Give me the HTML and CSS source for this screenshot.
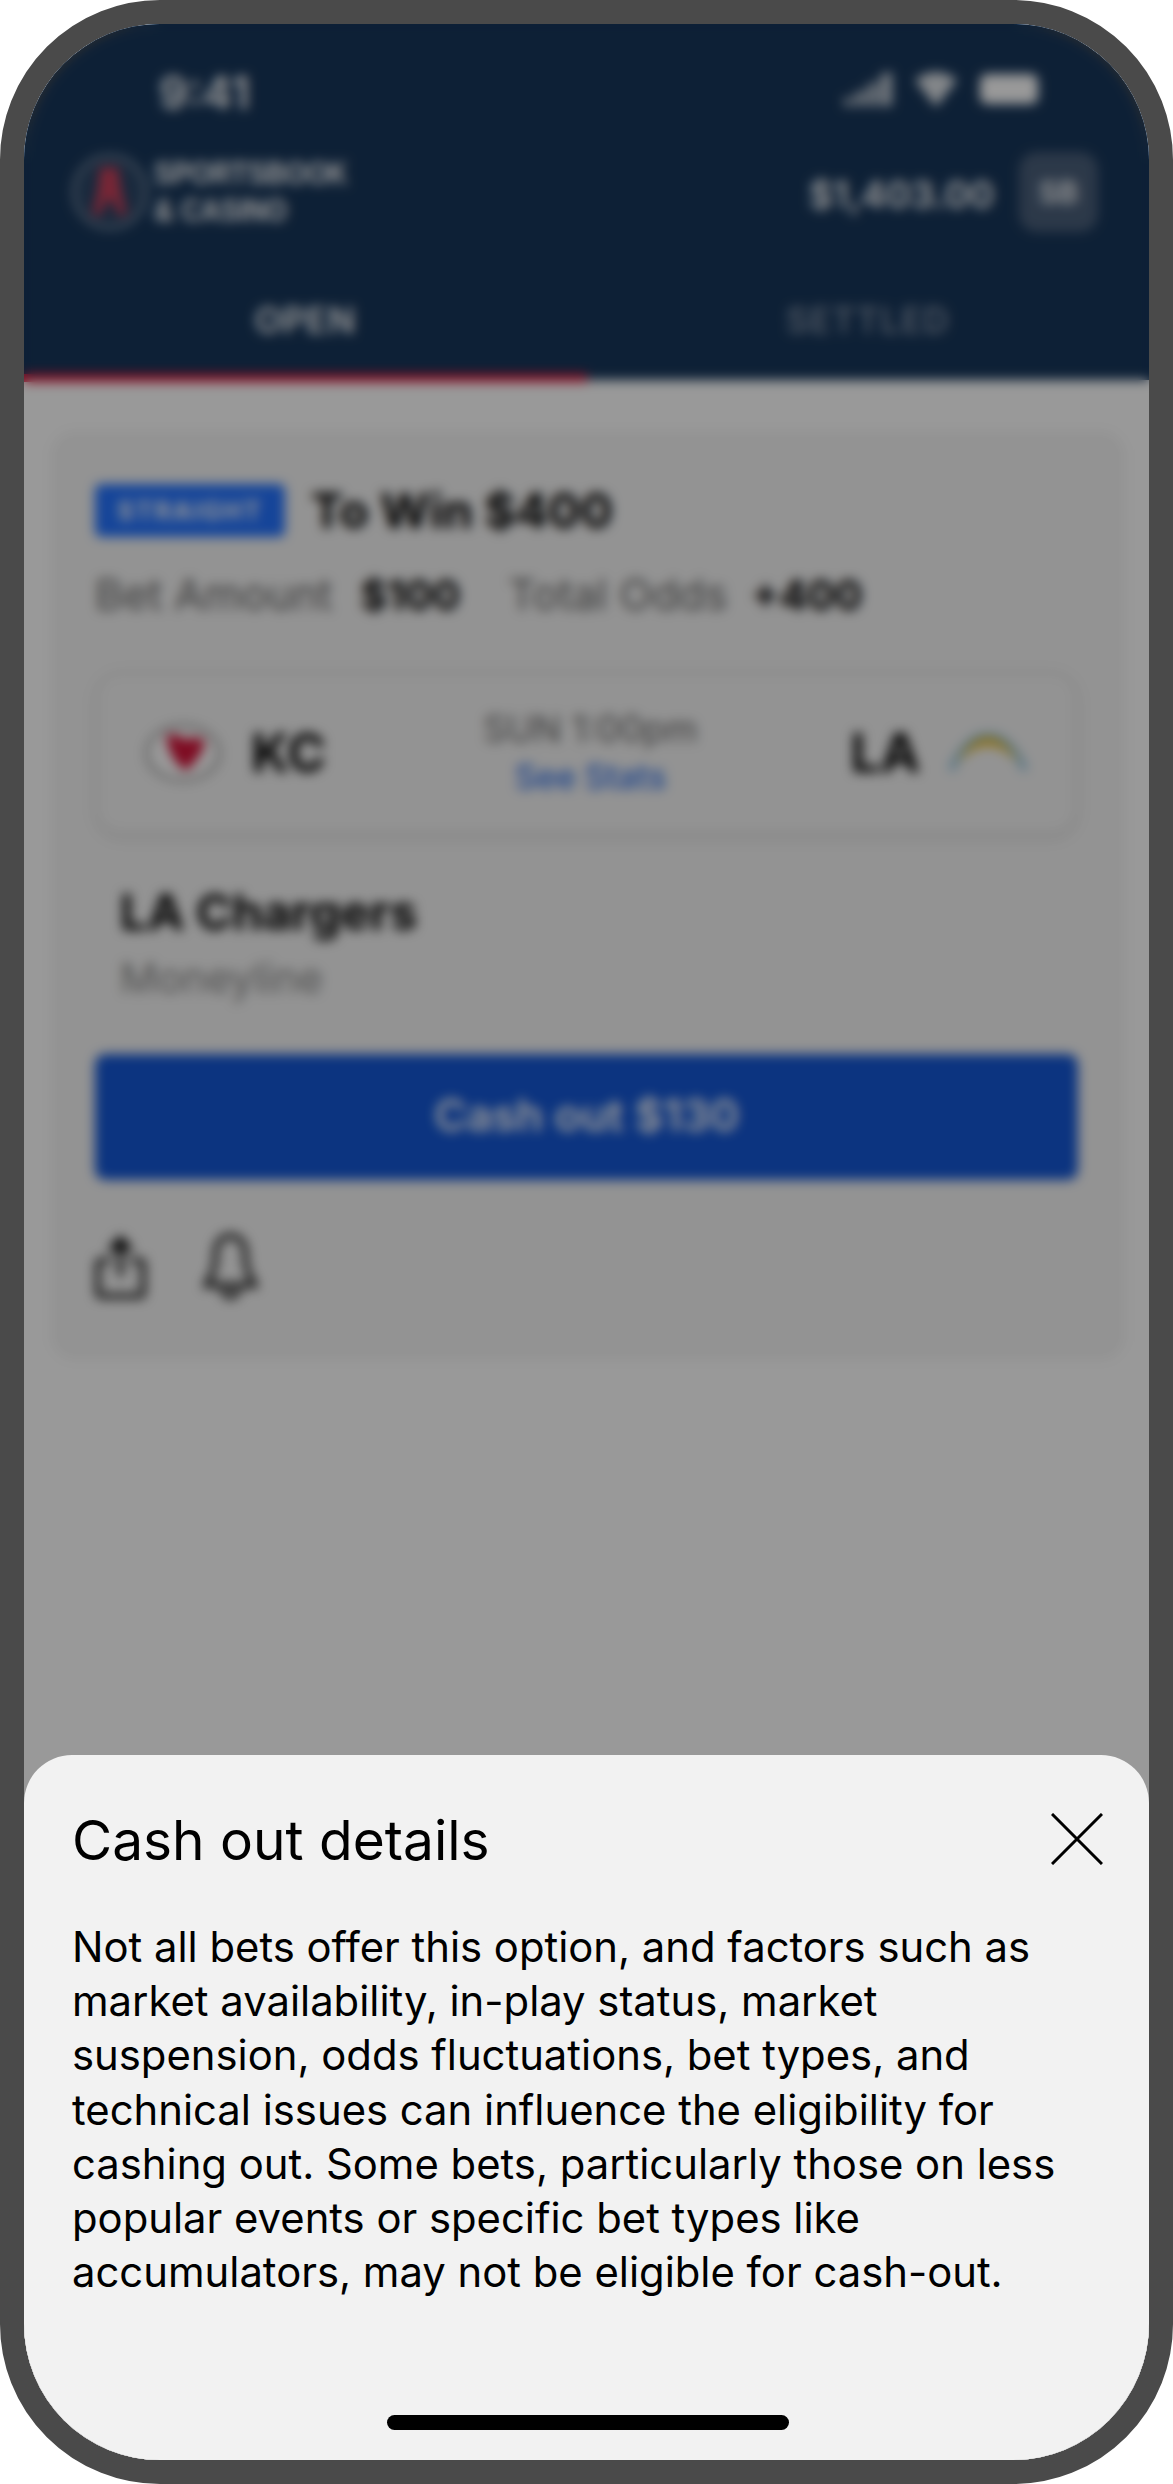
FILE: index.html
```html
<!DOCTYPE html>
<html lang="en">
<head>
<meta charset="utf-8">
<title>Cash out details</title>
<link rel="stylesheet" href="styles.css">
</head>
<body>
<div class="phone">
  <div class="screen">
    <header class="top">
      <div class="status">
        <span class="time">9:41</span>
        <div class="status-icons">
          <svg class="sig" viewBox="0 0 52 34"><path d="M0 34V26h9v8zM12 34V19h9v15zM24 34V11h9v23zM36 34V3l10-3h2v34z"/></svg>
          <svg class="wifi" viewBox="0 0 42 36"><path d="M0 9Q21-7 42 9L21 36z"/></svg>
          <svg class="batt" viewBox="0 0 58 30"><rect width="58" height="30" rx="7"/></svg>
        </div>
      </div>
      <div class="brandbar">
        <div class="brand">
          <svg class="mark" viewBox="0 0 78 78"><circle cx="39" cy="39" r="36" fill="#fff" fill-opacity=".08" stroke="#fff" stroke-opacity=".4" stroke-width="4"/><path d="M29 14h18l3 22 6 26H46l-3-14h-9l-3 14H21l6-26z" fill="#c8405a"/></svg>
          <div class="brand-text"><span>SPORTSBOOK</span><span>&amp; CASINO</span></div>
        </div>
        <div class="account">
          <span class="bal">$1,403.00</span>
          <span class="avatar">SB</span>
        </div>
      </div>
      <nav class="tabs">
        <div class="tab active">OPEN</div>
        <div class="tab muted">SETTLED</div>
      </nav>
    </header>
    <main class="content">
      <section class="card">
        <div class="headline">
          <span class="badge">STRAIGHT</span>
          <span class="towin">To Win $400</span>
        </div>
        <div class="amounts">
          <span class="lbl">Bet Amount</span><strong class="val">$100</strong>
          <span class="lbl lbl2">Total Odds</span><strong class="val val2">+400</strong>
        </div>
        <div class="game">
          <div class="team">
            <svg class="kc" viewBox="0 0 76 58"><ellipse cx="38" cy="29" rx="36" ry="27" fill="#fff" stroke="#888" stroke-width="3"/><path d="M21 11q11-3 19 5 8-5 20 0-1 14-19 31Q24 36 21 11z" fill="#d3143a"/></svg>
            <span class="abbr">KC</span>
          </div>
          <div class="when">
            <span class="kick">SUN 1:00pm</span>
            <span class="stats">See Stats</span>
          </div>
          <div class="team">
            <span class="abbr">LA</span>
            <svg class="lac" viewBox="0 0 80 42"><path d="M3 38Q20 2 40 4q20-2 37 34" fill="none" stroke="#6fb4dd" stroke-width="5"/><path d="M8 32Q22 5 40 5q18 0 32 27Q56 14 40 14T8 32z" fill="#f2c230"/></svg>
          </div>
        </div>
        <div class="pick">
          <div class="pick-team">LA Chargers</div>
          <div class="pick-mkt">Moneyline</div>
        </div>
        <button class="cash">Cash out $130</button>
        <div class="actions">
          <svg class="act" viewBox="0 0 52 68"><path d="M16 28H6a3 3 0 0 0-3 3v30a3 3 0 0 0 3 3h40a3 3 0 0 0 3-3V31a3 3 0 0 0-3-3H36M26 44V6" fill="none" stroke="#000" stroke-width="5"/><path d="M12 18 26 2l14 16z"/></svg>
          <svg class="act bell" viewBox="0 0 56 68"><path d="M28 3c-10 0-15 8-15 18 0 14-4 24-10 32h50c-6-8-10-18-10-32 0-10-5-18-15-18zM19 57q9 16 18 0" fill="none" stroke="#000" stroke-width="5"/></svg>
        </div>
      </section>
    </main>
  </div>
  <div class="scrim"></div>
  <aside class="sheet">
    <div class="sheet-head">
      <h2 class="sheet-title">Cash out details</h2>
      <svg class="close" viewBox="0 0 52 52"><path d="M1 1 51 51M51 1 1 51" fill="none" stroke="#000" stroke-width="3"/></svg>
    </div>
    <p class="sheet-body">Not all bets offer this option, and factors such as market availability, in-play status, market suspension, odds fluctuations, bet types, and technical issues can influence the eligibility for cashing out. Some bets, particularly those on less popular events or specific bet types like accumulators, may not be eligible for cash-out.</p>
    <div class="home"></div>
  </aside>
</div>
</body>
</html>
```
FILE: styles.css
```css
* { box-sizing: border-box; }
html, body { margin: 0; background: #fff; }
body { font-family: Inter, "Liberation Sans", sans-serif; }
.phone {
  position: relative;
  width: 1173px;
  height: 2484px;
  border: 24px solid #4a4a4a;
  border-radius: 160px;
  overflow: hidden;
  background: #fff;
}
.screen { height: 100%; display: flex; flex-direction: column; background: #fff; }
.top { background: #17365a; color: #fff; height: 356px; display: flex; flex-direction: column; }
.status { display: flex; justify-content: space-between; align-items: center; height: 70px; margin-top: 33px; padding: 0 111px 0 135px; }
.time { font-size: 45px; font-weight: 600; }
.status-icons { display: flex; align-items: center; gap: 19px; margin-bottom: 6px; }
.status-icons svg { fill: #fff; display: block; }
.sig { width: 52px; height: 34px; fill-opacity: .75; }
.wifi { width: 42px; height: 36px; fill-opacity: .85; }
.batt { width: 58px; height: 30px; margin-left: 4px; }
.brandbar { display: flex; justify-content: space-between; align-items: center; padding: 0 51px 0 47px; margin-top: 25px; height: 80px; }
.brand { display: flex; align-items: center; gap: 5px; }
.mark { width: 78px; height: 78px; }
.brand-text { display: flex; flex-direction: column; font-family: "Liberation Sans", sans-serif; font-weight: 700; font-size: 32px; line-height: 37px; }
.brand-text span { display: block; width: 192px; transform-origin: left; transform: scaleX(.85); white-space: nowrap; }
.account { display: flex; align-items: center; gap: 25px; }
.bal { font-size: 37.5px; font-weight: 600; padding-top: 5px; }
.avatar { width: 79px; height: 80px; border-radius: 18px; background: #4a5f7a; display: flex; align-items: center; justify-content: center; font-size: 30px; font-weight: 600; }
.tabs { display: grid; grid-template-columns: 1fr 1fr; margin-top: auto; }
.tab { height: 88px; display: flex; align-items: center; justify-content: center; font-size: 35px; font-weight: 600; letter-spacing: 1px; padding-bottom: 28px; border-bottom: 8px solid transparent; margin-bottom: -2px; }
.tab.active { border-color: #e8183a; }
.tab.muted { color: #8593a6; }
.content { flex: 1; padding: 51px 24px 0 27px; }
.card { height: 929px; background: #f5f5f5; border-radius: 24px; padding: 50px 47px 0 44px; }
.headline { display: flex; align-items: center; gap: 26px; }
.badge { width: 190px; height: 53px; background: #2473ff; color: #fff; border-radius: 6px; font-size: 25px; font-weight: 700; letter-spacing: 2px; display: flex; align-items: center; justify-content: center; }
.towin { font-size: 48px; font-weight: 700; color: #000; }
.amounts { display: flex; align-items: baseline; margin-top: 28px; font-size: 43px; height: 54px; }
.lbl { color: #666; }
.lbl2 { margin-left: 48px; }
.val { margin-left: 28px; font-size: 41px; font-weight: 700; color: #000; }
.val2 { margin-left: 24px; }
.game { display: flex; justify-content: space-between; align-items: center; height: 164px; margin-top: 49px; border: 3px solid #e3e3e3; border-radius: 26px; padding: 0 47px 0 47px; box-shadow: 0 4px 8px rgba(0,0,0,.08); }
.team { display: flex; align-items: center; gap: 30px; }
.kc { width: 76px; height: 58px; }
.lac { width: 80px; height: 42px; margin-left: -2px; }
.abbr { font-size: 53px; font-weight: 700; color: #000; }
.when { display: flex; flex-direction: column; align-items: center; font-size: 36.5px; line-height: 48px; margin-left: 4px; }
.kick { color: #666; }
.stats { color: #2d6fe8; font-size: 33.5px; font-weight: 500; }
.pick { padding: 0 25px; margin-top: 50px; }
.pick-team { font-size: 49px; font-weight: 700; color: #000; line-height: 56px; }
.pick-mkt { font-size: 41.5px; color: #888; line-height: 50px; margin-top: 12px; }
.cash { display: block; width: 983px; height: 126px; margin-top: 51px; padding: 0 0 5px; border: 0; border-radius: 10px; background: #1457d5; color: #fff; font: 600 44px Inter, sans-serif; }
.actions { display: flex; gap: 57px; margin-top: 53px; align-items: center; }
.act { width: 51px; height: 67px; display: block; }
.bell { width: 55px; }
.scrim { position: absolute; inset: 0; background: rgba(0,0,0,.4); -webkit-backdrop-filter: blur(6px); backdrop-filter: blur(6px); }
.sheet { position: absolute; left: 0; right: 0; bottom: 0; height: 705px; background: #f2f2f2; border-radius: 48px 48px 0 0; padding: 46px 46px 0 48px; }
.sheet-head { display: flex; justify-content: space-between; align-items: flex-start; }
.sheet-title { margin: 0; padding-top: 8px; font-size: 55px; line-height: 62px; font-weight: 400; color: #000; }
.close { width: 52px; height: 52px; margin-top: 12px; }
.sheet-body { margin: 49px 0 0; font-size: 41.8px; line-height: 54.2px; color: #000; max-width: 1010px; }
.home { position: absolute; left: 363px; bottom: 30px; width: 402px; height: 15px; border-radius: 8px; background: #000; }
```
